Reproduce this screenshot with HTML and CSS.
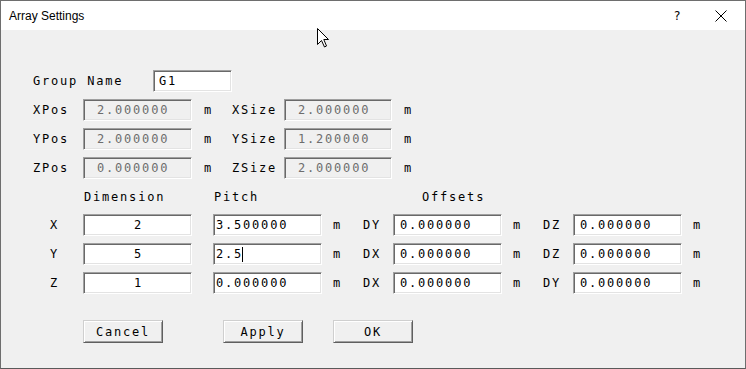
FILE: index.html
```html
<!DOCTYPE html>
<html>
<head>
<meta charset="utf-8">
<link rel="stylesheet" href="styles.css">
</head>
<body>
<div class="win">
  <div class="titlebar">
    <span class="title">Array Settings</span>
    <span class="help">?</span>
    <span class="close"><svg width="12" height="12" viewBox="0 0 12 12"><path d="M0.5 0.5 L11.5 11.5 M11.5 0.5 L0.5 11.5" stroke="#000" stroke-width="1" fill="none"/></svg></span>
  </div>
  <div class="content">
    <div class="name-row">
      <span class="lbl name-lbl">Group Name</span>
      <div class="field name-field">G1</div>
    </div>
    <div class="top-grid">
      <span class="lbl">XPos</span><div class="field off">2.000000</div><span class="lbl unit">m</span><span class="lbl">XSize</span><div class="field off">2.000000</div><span class="lbl unit">m</span>
      <span class="lbl">YPos</span><div class="field off">2.000000</div><span class="lbl unit">m</span><span class="lbl">YSize</span><div class="field off">1.200000</div><span class="lbl unit">m</span>
      <span class="lbl">ZPos</span><div class="field off">0.000000</div><span class="lbl unit">m</span><span class="lbl">ZSize</span><div class="field off">2.000000</div><span class="lbl unit">m</span>
    </div>
    <div class="arr-grid">
      <span></span><span class="lbl hdr">Dimension</span><span></span><span class="lbl hdr">Pitch</span><span></span><span></span><span class="lbl hdr offs">Offsets</span><span></span><span></span><span></span><span></span>

      <span class="lbl axis">X</span><div class="field dim">2</div><span></span><div class="field pitch">3.500000</div><span class="lbl unit">m</span><span class="lbl unit">DY</span><div class="field offv">0.000000</div><span class="lbl unit">m</span><span class="lbl unit">DZ</span><div class="field offv">0.000000</div><span class="lbl unit">m</span>

      <span class="lbl axis">Y</span><div class="field dim">5</div><span></span><div class="field pitch">2.5<span class="caret"></span></div><span class="lbl unit">m</span><span class="lbl unit">DX</span><div class="field offv">0.000000</div><span class="lbl unit">m</span><span class="lbl unit">DZ</span><div class="field offv">0.000000</div><span class="lbl unit">m</span>

      <span class="lbl axis">Z</span><div class="field dim">1</div><span></span><div class="field pitch">0.000000</div><span class="lbl unit">m</span><span class="lbl unit">DX</span><div class="field offv">0.000000</div><span class="lbl unit">m</span><span class="lbl unit">DY</span><div class="field offv">0.000000</div><span class="lbl unit">m</span>
    </div>
    <div class="buttons">
      <div class="btn cancel">Cancel</div>
      <div class="btn apply">Apply</div>
      <div class="btn ok">OK</div>
    </div>
  </div>
  <svg class="pointer" width="13" height="20" viewBox="0 0 13 20"><path d="M0.5 0.5 L0.5 16.5 L4.5 12.5 L7.5 19 L9.5 18 L6.8 11.5 L11.5 11.5 Z" fill="#fff" stroke="#000" stroke-width="1" stroke-linejoin="miter"/></svg>
</div>
</body>
</html>
```
FILE: styles.css
```css
html, body {
  margin: 0;
  padding: 0;
}
body {
  width: 746px;
  height: 369px;
  overflow: hidden;
  background: #f0f0f0;
}
.win {
  position: relative;
  box-sizing: border-box;
  width: 746px;
  height: 369px;
  border: 1px solid #6e6e6e;
  border-bottom-color: #5a5a5a;
  background: #f0f0f0;
}
.titlebar {
  height: 29px;
  background: #fff;
  display: flex;
  align-items: center;
  font-family: "Liberation Sans", Arial, sans-serif;
  font-size: 12px;
  color: #000;
}
.title {
  margin-left: 8px;
  flex: 1;
}
.help {
  width: 12px;
  margin-right: 29px;
  font-family: "DejaVu Sans", sans-serif;
  font-size: 12px;
}
.close {
  display: flex;
  width: 12px;
  margin-right: 18px;
}
.content {
  padding: 40px 0 0 32px;
  font-family: "DejaVu Sans Mono", monospace;
  font-size: 12px;
  letter-spacing: 1.8px;
  color: #000;
}
.lbl {
  display: flex;
  align-items: center;
  white-space: nowrap;
}
.name-row {
  display: flex;
  height: 22px;
  margin-bottom: 7px;
}
.name-lbl {
  width: 120px;
}
.field {
  box-sizing: border-box;
  height: 22px;
  display: flex;
  align-items: center;
  background: #fff;
  border: 1px solid;
  border-color: #a0a0a0 #ffffff #ffffff #a0a0a0;
  box-shadow: inset 1px 1px 0 #696969, inset -1px -1px 0 #e3e3e3;
  white-space: nowrap;
}
.name-field {
  width: 79px;
  padding-left: 5px;
}
.top-grid {
  display: grid;
  grid-template-columns: 50px 109px 40px 52px 108px 40px;
  grid-auto-rows: 22px;
  row-gap: 7px;
}
.field.off {
  background: #f0f0f0;
  color: #6d6d6d;
  padding-left: 13px;
}
.unit {
  padding-left: 11px;
}
.top-grid .unit {
  padding-left: 12px;
}
.arr-grid {
  margin-top: 7px;
  display: grid;
  grid-template-columns: 50px 109px 21px 109px 30px 41px 109px 30px 41px 109px 30px;
  grid-template-rows: 21px 22px 22px 22px;
  row-gap: 7px;
}
.hdr {
  padding-left: 1px;
}
.hdr.offs {
  padding-left: 29px;
}
.axis {
  padding-left: 17px;
}
.field.dim {
  justify-content: center;
  padding-left: 2px;
}
.field.pitch {
  padding-left: 2px;
}
.field.offv {
  padding-left: 6px;
}
.caret {
  display: inline-block;
  width: 1px;
  height: 15px;
  background: #000;
  margin-left: -1px;
}
.buttons {
  display: flex;
  margin-top: 26px;
  padding-left: 50px;
}
.btn {
  box-sizing: border-box;
  width: 80px;
  height: 23px;
  display: flex;
  align-items: center;
  justify-content: center;
  background: #f0f0f0;
  border: 1px solid;
  border-color: #cfcfcf #5f5f5f #5f5f5f #cfcfcf;
  box-shadow: inset 1px 1px 0 #ffffff, inset -1px -1px 0 #a0a0a0;
}
.apply {
  margin-left: 60px;
}
.ok {
  margin-left: 30px;
}
.pointer {
  position: absolute;
  left: 316px;
  top: 27px;
}
```
